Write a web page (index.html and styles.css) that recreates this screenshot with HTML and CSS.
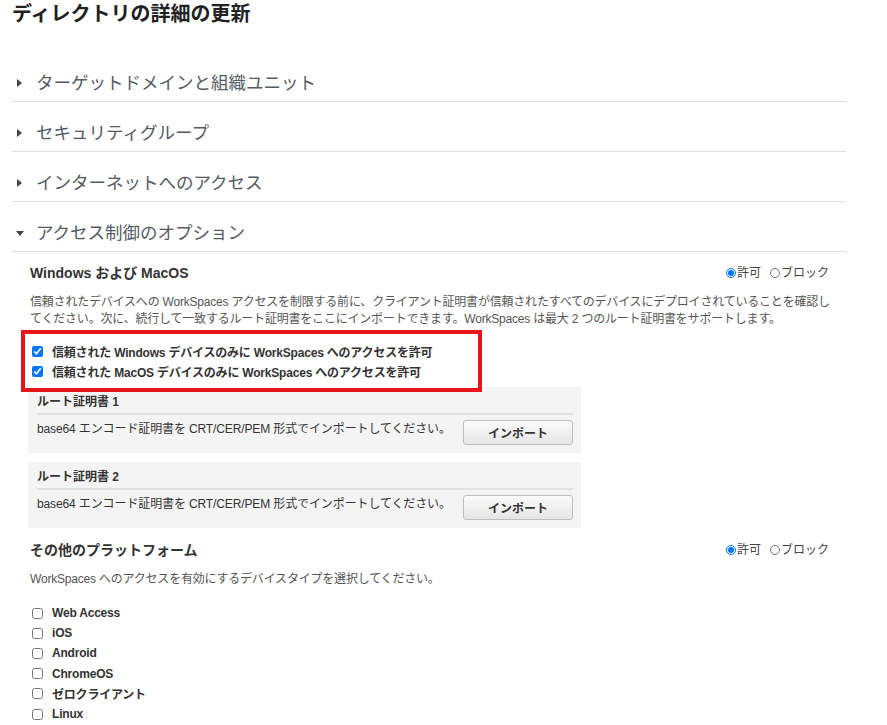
FILE: index.html
```html
<!DOCTYPE html>
<html lang="ja">
<head>
<meta charset="utf-8">
<title>ディレクトリの詳細の更新</title>
<link rel="stylesheet" href="styles.css">
</head>
<body>
<div class="page">
  <h1 class="title">ディレクトリの詳細の更新</h1>

  <div class="sections">
    <div class="section"><span class="caret-box"><span class="caret caret-right"></span></span><span class="section-label">ターゲットドメインと組織ユニット</span></div>
    <div class="section"><span class="caret-box"><span class="caret caret-right"></span></span><span class="section-label">セキュリティグループ</span></div>
    <div class="section"><span class="caret-box"><span class="caret caret-right"></span></span><span class="section-label">インターネットへのアクセス</span></div>
    <div class="section"><span class="caret-box"><span class="caret caret-down"></span></span><span class="section-label">アクセス制御のオプション</span></div>
  </div>

  <div class="panel">
    <div class="group-head">
      <h2 class="group-title">Windows および MacOS</h2>
      <div class="radios">
        <label class="radio"><input type="radio" name="win" checked><span>許可</span></label>
        <label class="radio"><input type="radio" name="win"><span>ブロック</span></label>
      </div>
    </div>
    <p class="desc desc-first">信頼されたデバイスへの WorkSpaces アクセスを制限する前に、クライアント証明書が信頼されたすべてのデバイスにデプロイされていることを確認してください。次に、続行して一致するルート証明書をここにインポートできます。WorkSpaces は最大 2 つのルート証明書をサポートします。</p>

    <div class="highlight">
      <label class="check"><input type="checkbox" checked><span>信頼された Windows デバイスのみに WorkSpaces へのアクセスを許可</span></label>
      <label class="check"><input type="checkbox" checked><span>信頼された MacOS デバイスのみに WorkSpaces へのアクセスを許可</span></label>
    </div>

    <div class="cert">
      <div class="cert-title">ルート証明書 1</div>
      <div class="cert-row">
        <span class="cert-text">base64 エンコード証明書を CRT/CER/PEM 形式でインポートしてください。</span>
        <button class="btn">インポート</button>
      </div>
    </div>
    <div class="cert cert-second">
      <div class="cert-title">ルート証明書 2</div>
      <div class="cert-row">
        <span class="cert-text">base64 エンコード証明書を CRT/CER/PEM 形式でインポートしてください。</span>
        <button class="btn">インポート</button>
      </div>
    </div>

    <div class="group-head group-head-other">
      <h2 class="group-title">その他のプラットフォーム</h2>
      <div class="radios">
        <label class="radio"><input type="radio" name="other" checked><span>許可</span></label>
        <label class="radio"><input type="radio" name="other"><span>ブロック</span></label>
      </div>
    </div>
    <p class="desc desc-other">WorkSpaces へのアクセスを有効にするデバイスタイプを選択してください。</p>

    <ul class="platforms">
      <li><label class="check"><input type="checkbox"><span>Web Access</span></label></li>
      <li><label class="check"><input type="checkbox"><span>iOS</span></label></li>
      <li><label class="check"><input type="checkbox"><span>Android</span></label></li>
      <li><label class="check"><input type="checkbox"><span>ChromeOS</span></label></li>
      <li><label class="check"><input type="checkbox"><span>ゼロクライアント</span></label></li>
      <li><label class="check"><input type="checkbox"><span>Linux</span></label></li>
    </ul>
  </div>
</div>
</body>
</html>
```

FILE: styles.css
```css
* { box-sizing: border-box; }

html, body {
  margin: 0;
  padding: 0;
  background: #ffffff;
}

body {
  font-family: "Liberation Sans", "Noto Sans CJK JP", sans-serif;
  color: #333333;
  overflow: hidden;
}

.page {
  width: 834px;
  margin-left: 12px;
}

.title {
  margin: 0;
  font-size: 20px;
  line-height: 28px;
  font-weight: bold;
  color: #222222;
}

.sections {
  margin-top: 24px;
}

.section {
  display: flex;
  align-items: center;
  padding: 21px 0 8px 0;
  height: 50px;
  border-bottom: 1px solid #dedede;
}

.caret-box {
  width: 24px;
  display: flex;
  align-items: center;
  padding-left: 5px;
}

.caret {
  display: block;
  width: 0;
  height: 0;
}

.caret-right {
  border-left: 5px solid #444444;
  border-top: 4px solid transparent;
  border-bottom: 4px solid transparent;
}

.caret-down {
  margin-left: -1px;
  border-top: 5px solid #444444;
  border-left: 4px solid transparent;
  border-right: 4px solid transparent;
}

.section-label {
  font-size: 17.5px;
  line-height: 20px;
  color: #545b64;
}

.panel {
  padding: 0 16px 0 18px;
}

.group-head {
  display: flex;
  justify-content: space-between;
  align-items: center;
  margin-top: 12px;
  height: 18px;
}

.group-head-other {
  margin-top: 13px;
}

.group-title {
  margin: 0;
  font-size: 14px;
  line-height: 18px;
  font-weight: bold;
  color: #333333;
}

.radios {
  display: flex;
  align-items: center;
  gap: 9px;
  margin-right: 1px;
}

.radio {
  display: flex;
  align-items: center;
  font-size: 12px;
  line-height: 16px;
  color: #444444;
}

.radio input {
  width: 10px;
  height: 10px;
  margin: 0 1px 0 0;
}

.desc {
  margin: 12px 0 0 0;
  font-size: 12px;
  line-height: 17px;
  letter-spacing: -0.2px;
  color: #555555;
}

.desc-other {
  margin-top: 12px;
}

.highlight {
  position: relative;
  z-index: 1;
  width: 461px;
  margin: 2px 0 -5px -9px;
  padding: 7px 0 7px 7px;
  border: 4px solid #e8141c;
}

.check {
  display: flex;
  align-items: center;
  height: 20px;
  font-size: 12px;
  font-weight: bold;
  letter-spacing: -0.2px;
  color: #333333;
}

.check input {
  width: 11px;
  height: 11px;
  margin: 0 9px 0 0;
}

.cert {
  width: 553px;
  margin-left: -2px;
  background: #f4f4f4;
  padding: 6px 8px 8px 9px;
}

.cert-second {
  margin-top: 9px;
}

.cert-title {
  font-size: 12px;
  line-height: 18px;
  font-weight: bold;
  color: #333333;
  padding-bottom: 2px;
  border-bottom: 2px solid #e1e1e4;
}

.cert-row {
  display: flex;
  justify-content: space-between;
  align-items: flex-start;
  margin-top: 5px;
}

.cert-text {
  font-size: 12px;
  line-height: 18px;
  letter-spacing: -0.12px;
  color: #333333;
}

.btn {
  width: 110px;
  height: 25px;
  padding: 0;
  font-family: "Liberation Sans", "Noto Sans CJK JP", sans-serif;
  font-size: 12px;
  font-weight: bold;
  color: #333333;
  background: linear-gradient(#fbfbfb, #e6e6e6);
  border: 1px solid #bdbdbd;
  border-radius: 3px;
}

.platforms {
  list-style: none;
  margin: 15px 0 0 0;
  padding: 0 0 0 2px;
}

.platforms li {
  height: 20.2px;
}

.platforms .check {
  height: 20.2px;
}
```
